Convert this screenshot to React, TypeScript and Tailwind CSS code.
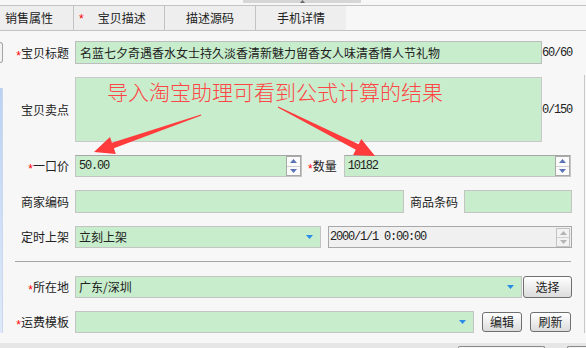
import type { ReactNode } from "react";

const MONO = "font-['Liberation_Mono',monospace] text-[12px] tracking-[-1.2px]";

function Star() {
  return (
    <span className="inline-block translate-y-[3px] font-['Liberation_Sans',sans-serif] text-[12px] leading-none text-[#ff0000]">
      *
    </span>
  );
}

function Label({ children, star }: { children: ReactNode; star?: boolean }) {
  return (
    <div className="flex w-[66px] shrink-0 items-center justify-end text-[12px] text-[#222]">
      {star && <Star />}
      <span>{children}</span>
    </div>
  );
}

function Caret() {
  return (
    <svg width="7" height="4" viewBox="0 0 7 4" className="shrink-0">
      <path d="M0 0h7L3.5 4z" fill="#2a8be8" />
    </svg>
  );
}

function Spinner({ disabled }: { disabled?: boolean }) {
  const fill = disabled ? "#b4b4b4" : "#5b74b8";
  return (
    <div
      className={
        disabled
          ? "mr-[1px] flex h-[19px] w-[14px] shrink-0 flex-col border border-[#c4c4c4] bg-[#f2f2f2]"
          : "flex h-full w-[15px] shrink-0 flex-col border border-[#a9a9a9] bg-[#fbfbfb]"
      }
    >
      <div className="flex flex-1 items-center justify-center border-b border-[#d0d0d0]">
        <svg width="7" height="4" viewBox="0 0 7 4">
          <path d="M3.5 0L7 4H0z" fill={fill} />
        </svg>
      </div>
      <div className="flex flex-1 items-center justify-center">
        <svg width="7" height="4" viewBox="0 0 7 4">
          <path d="M0 0h7L3.5 4z" fill={fill} />
        </svg>
      </div>
    </div>
  );
}

function Btn({ children, w }: { children: ReactNode; w: string }) {
  return (
    <div
      className={`${w} flex h-full items-center justify-center rounded-[3px] border border-[#6f6f6f] bg-linear-to-b from-white to-[#dcdcdc] text-[12px] text-[#222]`}
    >
      {children}
    </div>
  );
}

export default function App() {
  return (
    <div className="relative h-[348px] w-[586px] overflow-hidden bg-[#f7f7f7] font-['Noto_Sans_CJK_SC','Noto_Sans',sans-serif] text-[#222]">
      {/* scrollbar above tabs */}
      <div className="flex h-[5px]">
        <div className="ml-[243px] flex h-[3px] w-[118px] justify-center bg-[#d6d6d6]">
          <svg width="5" height="3" viewBox="0 0 5 3">
            <path d="M2.5 0L5 3H0z" fill="#6a6a6a" />
          </svg>
        </div>
      </div>

      {/* tabs */}
      <div className="flex h-[26px] border-y border-[#c3c3c3] text-[12px]">
        <div className="flex w-[74px] items-center border-r border-[#c3c3c3] bg-[#eeeeee] pl-[5px]">销售属性</div>
        <div className="flex w-[91px] items-center border-r border-[#c3c3c3] bg-[#eeeeee] pl-[5px]">
          <span className="inline-block translate-y-[1px] font-['Liberation_Sans',sans-serif] text-[12px] leading-none text-[#ff0000]">*</span>
          <span className="ml-[14px]">宝贝描述</span>
        </div>
        <div className="flex w-[91px] items-center justify-center border-r border-[#c3c3c3] bg-[#eeeeee]">描述源码</div>
        <div className="flex w-[90px] items-center justify-center bg-[#eeeeee]">手机详情</div>
      </div>

      <div className="flex h-[312px]">
        {/* left edge */}
        <div className="flex w-[3px] shrink-0 flex-col">
          <div className="mt-[11px] h-[21px] rounded-r-[3px] border-y border-r border-[#a4a4a4] bg-[#f2f2f2]" />
          <div className="mt-[25px] h-[245px] border-r border-[#c9d9f1] bg-linear-to-b from-[#bcd2f1] to-[#dfe9f8]" />
        </div>

        {/* form */}
        <div className="flex w-[581px] shrink-0 flex-col">
          <div className="mt-[10px] flex h-[23px]">
            <Label star>宝贝标题</Label>
            <div className="ml-[6px] flex w-[467px] items-center border border-[#bdbdbd] bg-[#c7edcc] pl-[4px] text-[12px]">
              名蓝七夕奇遇香水女士持久淡香清新魅力留香女人味清香情人节礼物
            </div>
            <div className={`${MONO} flex items-center`}>60/60</div>
          </div>

          <div className="mt-[13px] flex h-[65px]">
            <Label>宝贝卖点</Label>
            <div className="ml-[6px] w-[467px] border border-[#c9c9c9] bg-[#c7edcc] pl-[31px] pt-[3px] text-[21px] font-light leading-[21px] text-[#ff4545]">
              导入淘宝助理可看到公式计算的结果
            </div>
            <div className={`${MONO} flex items-center`}>0/150</div>
          </div>

          <div className="mt-[13px] flex h-[22px]">
            <Label star>一口价</Label>
            <div className="ml-[6px] flex w-[227px] border border-[#c4c4c4] border-t-[#a6a6a6] bg-[#c7edcc]">
              <div className={`${MONO} flex flex-1 items-center pl-[3px]`}>50.00</div>
              <Spinner />
            </div>
            <div className="ml-[6px] flex items-center text-[12px]">
              <Star />
              <span>数量</span>
            </div>
            <div className="ml-[7px] flex w-[227px] border border-[#c4c4c4] border-t-[#a6a6a6] bg-[#c7edcc]">
              <div className={`${MONO} flex flex-1 items-center pl-[3px]`}>10182</div>
              <Spinner />
            </div>
          </div>

          <div className="mt-[13px] flex h-[23px]">
            <Label>商家编码</Label>
            <div className="ml-[6px] w-[329px] border border-[#c4c4c4] bg-[#c7edcc]" />
            <div className="ml-[6px] flex items-center text-[12px]">商品条码</div>
            <div className="ml-[6px] w-[108px] border border-[#c4c4c4] bg-[#c7edcc]" />
          </div>

          <div className="mt-[13px] flex h-[22px]">
            <Label>定时上架</Label>
            <div className="ml-[6px] flex w-[246px] items-center border border-[#c4c4c4] bg-[#c7edcc] pl-[3px] pr-[7px] text-[12px]">
              <span className="flex-1">立刻上架</span>
              <Caret />
            </div>
            <div className="ml-[7px] flex w-[244px] items-center border border-[#a8a8a8] bg-[#f0f0f0]">
              <div className={`${MONO} flex-1 pl-[1px]`}>2000/1/1 0:00:00</div>
              <Spinner disabled />
            </div>
          </div>

          <div className="ml-[12px] mt-[13px] h-[1px] w-[556px] bg-[#a6a6a6]" />

          <div className="mt-[14px] flex h-[22px]">
            <Label star>所在地</Label>
            <div className="ml-[6px] flex w-[447px] items-center border border-[#c4c4c4] bg-[#c7edcc] pl-[3px] pr-[7px] text-[12px]">
              <span className="flex-1">广东/深圳</span>
              <Caret />
            </div>
            <div className="ml-[1px] flex">
              <Btn w="w-[49px]">选择</Btn>
            </div>
          </div>

          <div className="mt-[13px] flex h-[22px]">
            <Label star>运费模板</Label>
            <div className="ml-[6px] flex w-[399px] items-center justify-end border border-[#c4c4c4] bg-[#c7edcc] pr-[7px]">
              <Caret />
            </div>
            <div className="ml-[8px] flex h-[20px] self-center">
              <Btn w="w-[40px]">编辑</Btn>
            </div>
            <div className="ml-[8px] flex h-[20px] self-center">
              <Btn w="w-[41px]">刷新</Btn>
            </div>
          </div>
        </div>

        {/* right edge */}
        <div className="mt-[44px] h-[258px] w-[1px] bg-[#c8c8c8]" />
      </div>

      {/* bottom strip */}
      <div className="flex h-[5px] items-end bg-[#e6e6e6]">
        <div className="ml-[458px] h-[2px] w-[90px] rounded-t-[3px] border-x border-t border-[#8a8a8a] bg-[#f4f4f4]" />
        <div className="ml-[22px] h-[2px] w-[20px] rounded-tl-[3px] border-l border-t border-[#8a8a8a] bg-[#f4f4f4]" />
      </div>

      {/* annotation arrows */}
      <svg className="pointer-events-none absolute left-0 top-0" width="586" height="348" viewBox="0 0 586 348">
        <polygon
          points="201,114.5 111.9,142.7 110,137 94,152 115.8,154 113.9,148.3 201.3,115.5"
          fill="#ff3b3b"
        />
        <polygon
          points="278.2,106.5 358.6,144.3 361.3,139 375,156 353.1,155 355.8,149.7 277.8,107.5"
          fill="#ff3b3b"
        />
      </svg>
    </div>
  );
}
